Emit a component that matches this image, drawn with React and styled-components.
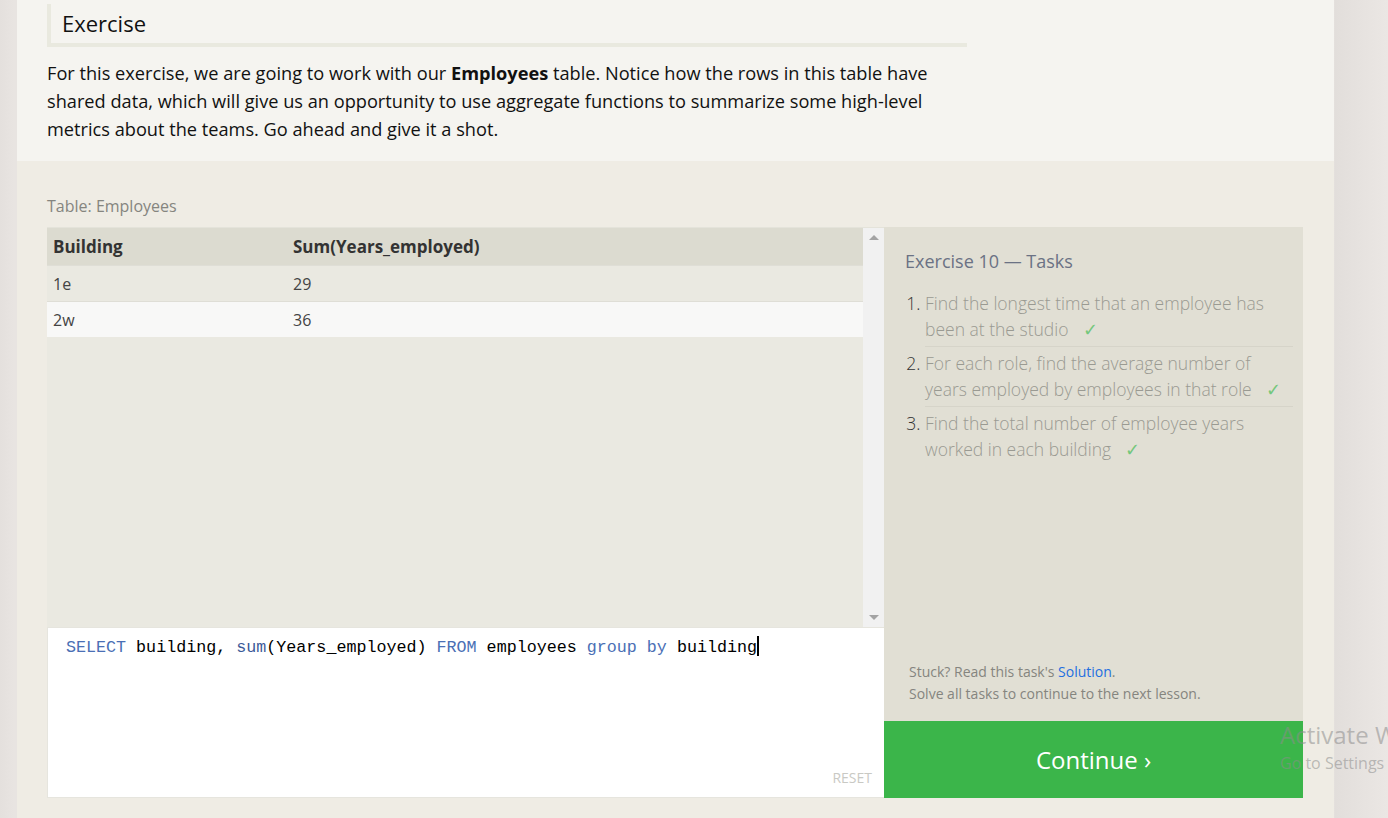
import React from "react";
import styled, { createGlobalStyle } from "styled-components";

const GlobalStyle = createGlobalStyle`
  html, body {
    margin: 0;
    padding: 0;
    background: #e8e4e1;
    font-family: "Open Sans", "Noto Sans", sans-serif;
  }
`;

const tasks = [
  "Find the longest time that an employee has been at the studio",
  "For each role, find the average number of years employed by employees in that role",
  "Find the total number of employee years worked in each building",
];

const rows = [
  { building: "1e", sum: 29 },
  { building: "2w", sum: 36 },
];

const App = () => {
  return (
    <>
      <GlobalStyle />
      <Page>
        <Main>
          <Intro>
            <Heading>Exercise</Heading>
            <Lead>
              For this exercise, we are going to work with our <b>Employees</b>{" "}
              table. Notice how the rows in this table have shared data, which
              will give us an opportunity to use aggregate functions to summarize
              some high-level metrics about the teams. Go ahead and give it a
              shot.
            </Lead>
          </Intro>
          <Workspace>
            <TableLabel>Table: Employees</TableLabel>
            <Grid>
              <LeftCol>
                <Results>
                  <ResultTable>
                    <thead>
                      <tr>
                        <Th>Building</Th>
                        <Th>Sum(Years_employed)</Th>
                      </tr>
                    </thead>
                    <tbody>
                      {rows.map((r, i) => (
                        <Tr key={r.building} $alt={i % 2 === 1}>
                          <Td>{r.building}</Td>
                          <Td>{r.sum}</Td>
                        </Tr>
                      ))}
                    </tbody>
                  </ResultTable>
                  <Scrollbar>
                    <Arrow />
                    <Arrow $down />
                  </Scrollbar>
                </Results>
                <Editor>
                  <Code>
                    <Kw>SELECT</Kw> building, <Fn>sum</Fn>(Years_employed){" "}
                    <Kw>FROM</Kw> employees <Kw>group</Kw> <Kw>by</Kw> building
                    <Caret />
                  </Code>
                  <Reset>RESET</Reset>
                </Editor>
              </LeftCol>
              <RightCol>
                <Tasks>
                  <TasksTitle>Exercise 10 — Tasks</TasksTitle>
                  <TaskList>
                    {tasks.map((t) => (
                      <Task key={t}>
                        {t}
                        <Check>✓</Check>
                      </Task>
                    ))}
                  </TaskList>
                  <Hint>
                    Stuck? Read this task's <a href="#">Solution</a>.
                    <br />
                    Solve all tasks to continue to the next lesson.
                  </Hint>
                </Tasks>
                <Continue>Continue ›</Continue>
              </RightCol>
            </Grid>
          </Workspace>
        </Main>
        <Watermark>
          <div className="big">Activate Windows</div>
          <div className="small">Go to Settings to activate Windows.</div>
        </Watermark>
      </Page>
    </>
  );
};

const Page = styled.div`
  position: relative;
  display: flex;
  width: 1388px;
  height: 818px;
  overflow: hidden;
  padding-left: 17px;
  box-sizing: border-box;
  background: linear-gradient(90deg, #e4e0dd 0%, #e8e4e1 1%, #e8e4e1 96%, #e2dedb 96.2%, #ebe7e4 100%);
`;

const Main = styled.div`
  width: 1317px;
  display: flex;
  flex-direction: column;
`;

const Intro = styled.div`
  background: #f5f4f0;
  padding: 4px 30px 0;
  height: 161px;
  box-sizing: border-box;
`;

const Heading = styled.h2`
  margin: 0;
  width: 920px;
  box-sizing: border-box;
  border-left: 4px solid #e9e9df;
  border-bottom: 4px solid #e9e9df;
  padding: 2px 11px 3px;
  font-size: 22px;
  font-weight: 400;
  line-height: 34px;
  color: #111;
`;

const Lead = styled.p`
  margin: 12px 0 0;
  width: 892px;
  font-size: 18.2px;
  line-height: 28px;
  color: #111;

  b {
    font-weight: 700;
  }
`;

const Workspace = styled.div`
  flex: 1;
  background: #efece4;
  padding: 34px 30px 0;
`;

const TableLabel = styled.div`
  font-size: 16px;
  line-height: 22px;
  color: #85857f;
  margin-bottom: 10px;
`;

const Grid = styled.div`
  display: grid;
  grid-template-columns: 837px 419px;
`;

const LeftCol = styled.div`
  display: flex;
  flex-direction: column;
`;

const Results = styled.div`
  height: 400px;
  display: flex;
  background: #eae9e1;
  border-top: 1px solid #e4e3da;
  box-sizing: border-box;
`;

const ResultTable = styled.table`
  flex: 1;
  align-self: flex-start;
  border-collapse: collapse;
  font-size: 16px;
`;

const Th = styled.th`
  text-align: left;
  background: #dcdbd0;
  color: #333;
  font-weight: 700;
  font-size: 17px;
  height: 37px;
  padding: 0 6px;
  width: 228px;

  &:last-child {
    width: auto;
  }
`;

const Tr = styled.tr`
  background: ${(p) => (p.$alt ? "#f8f8f7" : "#eae9e1")};
  border-top: 1px solid #dfded6;
`;

const Td = styled.td`
  height: 35px;
  padding: 0 6px;
  color: #444;
  font-weight: 400;
`;

const Scrollbar = styled.div`
  width: 21px;
  background: #f1f1f1;
  display: flex;
  flex-direction: column;
  justify-content: space-between;
  align-items: center;
  padding: 7px 0;
`;

const Arrow = styled.div`
  width: 0;
  height: 0;
  border-left: 5px solid transparent;
  border-right: 5px solid transparent;
  ${(p) =>
    p.$down
      ? "border-top: 5px solid #a3a3a3;"
      : "border-bottom: 5px solid #a3a3a3;"}
`;

const Editor = styled.div`
  position: relative;
  height: 171px;
  background: #fff;
  border: 1px solid #e6e5de;
  border-right: none;
  box-sizing: border-box;
`;

const Code = styled.div`
  padding: 8px 18px;
  font-family: "Liberation Mono", "DejaVu Sans Mono", monospace;
  font-size: 16.7px;
  line-height: 24px;
  color: #000;
  white-space: pre;
`;

const Kw = styled.span`
  color: #4a6fb5;
`;

const Fn = styled.span`
  color: #3c5a99;
`;

const Caret = styled.span`
  display: inline-block;
  width: 2px;
  height: 20px;
  background: #000;
  vertical-align: -4px;
`;

const Reset = styled.div`
  position: absolute;
  right: 12px;
  bottom: 10px;
  font-size: 14px;
  color: #c9c9c4;
`;

const RightCol = styled.div`
  display: flex;
  flex-direction: column;
`;

const Tasks = styled.div`
  height: 494px;
  background: #e1dfd4;
  padding: 22px 10px 16px 21px;
  box-sizing: border-box;
  display: flex;
  flex-direction: column;
`;

const TasksTitle = styled.div`
  font-size: 18px;
  color: #6b7284;
  line-height: 24px;
`;

const TaskList = styled.ol`
  margin: 14px 0 0;
  padding-left: 20px;
  flex: 1;
`;

const Task = styled.li`
  font-size: 17.5px;
  line-height: 26px;
  color: #9a9a92;
  font-weight: 300;
  padding: 3px 0 4px;
  border-bottom: 1px solid #d6d4c9;

  &::marker {
    color: #333;
  }

  &:last-child {
    border-bottom: none;
  }
`;

const Check = styled.span`
  color: #74c77c;
  margin-left: 14px;
`;

const Hint = styled.div`
  padding-left: 4px;
  font-size: 14px;
  line-height: 22px;
  color: #85857f;

  a {
    color: #1f6fe0;
    text-decoration: none;
  }
`;

const Continue = styled.button`
  height: 77px;
  border: none;
  background: #3bb54a;
  color: #fff;
  font-family: inherit;
  font-size: 24px;
  cursor: pointer;
`;

const Watermark = styled.div`
  position: absolute;
  left: 1280px;
  top: 718px;
  white-space: nowrap;
  color: rgba(140, 140, 140, 0.55);
  pointer-events: none;

  .big {
    font-size: 24px;
    line-height: 34px;
  }

  .small {
    font-size: 16px;
    line-height: 22px;
  }
`;

export default App;
